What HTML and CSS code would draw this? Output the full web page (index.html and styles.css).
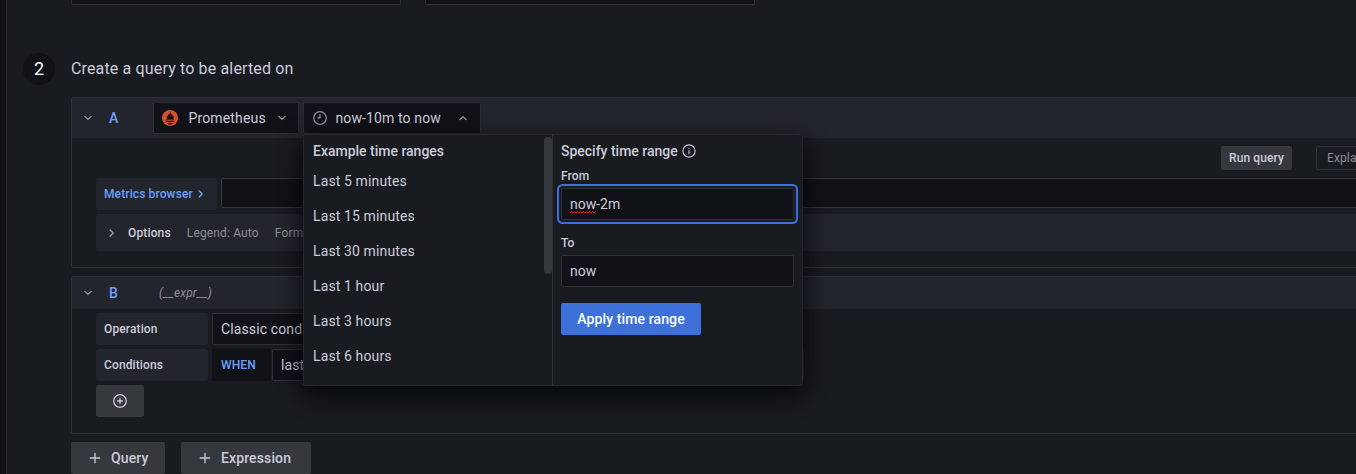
FILE: index.html
```
<!DOCTYPE html>
<html lang="en">
<head>
<meta charset="utf-8">
<title>Alert rule</title>
<link rel="stylesheet" href="styles.css">
</head>
<body>
<main class="panel">
  <div class="top-fields"><div class="top-field"></div><div class="top-field"></div></div>
  <header class="step">
    <div class="step-num">2</div>
    <h2 class="step-title">Create a query to be alerted on</h2>
  </header>

  <div class="content">
    <section class="card card-a">
      <div class="card-head head-a">
        <svg class="chev" viewBox="0 0 16 16"><path d="M4.800 6.400 8 9.400l3.200-3"/></svg>
        <span class="ref">A</span>
        <div class="picker picker-ds">
          <svg class="prom" viewBox="0 0 16 16"><circle cx="8" cy="8" r="8" fill="#da4e31"/><path fill="#17171b" d="M3.800 9.700h8.400L11.300 8.600c.5-1 .6-2 .1-3-.1.700-.3 1-.7 1.200.1-1.300-.4-2.400-.8-3.100-.1.700-.2 1-.4 1.300C9.200 3.500 8.600 2.600 8 1.400c.1 1.500-.7 2.300-1 3.600-.3-.3-.5-.7-.6-1.200-.4 1-.8 1.900-.7 2.900-.5-.3-.7-.7-.9-1.300-.3 1.100-.2 2.100.3 3.200zM3.600 10.800h8.800v1.200H3.600zM5 13h6c-.4 1-1.500 1.500-3 1.500s-2.600-.5-3-1.500z"/></svg>
          <span class="ds-name">Prometheus</span>
          <svg class="chev" viewBox="0 0 16 16"><path d="M4.800 6.400 8 9.400l3.200-3"/></svg>
        </div>
        <div class="picker picker-time">
          <svg class="clock" viewBox="0 0 16 16"><circle cx="8" cy="8" r="6.300"/><path d="M8 4.500V8H6"/></svg>
          <span class="time-value">now-10m to now</span>
          <svg class="chev" viewBox="0 0 16 16"><path d="M4.800 9.600 8 6.600l3.200 3"/></svg>
          <div class="popup">
            <div class="ranges">
              <h3 class="popup-title">Example time ranges</h3>
              <ul class="range-list">
                <li>Last 5 minutes</li><li>Last 15 minutes</li><li>Last 30 minutes</li><li>Last 1 hour</li><li>Last 3 hours</li><li>Last 6 hours</li>
              </ul>
              <div class="thumb"></div>
            </div>
            <div class="specify">
              <h3 class="popup-title">Specify time range <svg class="info" viewBox="0 0 16 16"><circle cx="8" cy="8" r="7"/><path d="M8 7.600v3.600M8 4.800v.4"/></svg></h3>
              <div class="label">From</div>
              <div class="input focused"><span class="misspelt">now<svg class="squiggle" viewBox="0 0 26 3"><path d="M0 2 1.500.7 3 2 4.500.7 6 2 7.500.7 9 2 10.500.7 12 2 13.500.7 15 2 16.500.7 18 2 19.500.7 21 2 22.500.7 24 2 25.500.7"/></svg></span>-2m</div>
              <div class="label label-to">To</div>
              <div class="input">now</div>
              <div class="apply">Apply time range</div>
            </div>
          </div>
        </div>
      </div>
      <div class="actions"><div class="run">Run query</div><div class="explain">Explain</div></div>
      <div class="metrics-row">
        <div class="metrics">Metrics browser <svg class="arrow" viewBox="0 0 8 12"><path d="m2.200 2.900 3 3.100-3 3.100"/></svg></div>
        <div class="expr"></div>
      </div>
      <div class="options">
        <svg class="arrow" viewBox="0 0 8 12"><path d="m2.200 2.900 3 3.100-3 3.100"/></svg>
        <span class="opt-title">Options</span><span class="opt">Legend: Auto</span><span class="opt">Form</span>
      </div>
    </section>

    <section class="card card-b">
      <div class="card-head head-b">
        <svg class="chev" viewBox="0 0 16 16"><path d="M4.800 6.400 8 9.400l3.200-3"/></svg>
        <span class="ref">B</span><em class="expr-name">(__expr__)</em>
      </div>
      <div class="rows">
        <div class="row"><div class="tag">Operation</div><div class="select op">Classic cond</div></div>
        <div class="row"><div class="tag">Conditions</div><div class="when">WHEN</div><div class="select last">last</div><div class="select threshold"></div></div>
        <div class="add"><svg class="plus-circle" viewBox="0 0 16 16"><circle cx="8" cy="8" r="6.300"/><path d="M8 5.500v5M5.500 8h5"/></svg></div>
      </div>
    </section>

    <div class="buttons">
      <div class="btn"><svg class="plus" viewBox="0 0 16 16"><path d="M8 3.300v9.400M3.300 8h9.400"/></svg>Query</div>
      <div class="btn btn-expression"><svg class="plus" viewBox="0 0 16 16"><path d="M8 3.300v9.400M3.300 8h9.400"/></svg>Expression</div>
    </div>
  </div>
</main>
</body>
</html>
```
FILE: styles.css
```
* { box-sizing: border-box; }
body {
  margin: 0;
  height: 474px;
  overflow: hidden;
  padding-left: 6px;
  background: #111217;
  color: #ccccdc;
  font: 14px/22px Roboto, sans-serif;
  letter-spacing: 0.12px;
}
svg { fill: none; stroke: currentColor; stroke-width: 1.3; stroke-linecap: round; stroke-linejoin: round; flex: none; display: block; }
h2, h3, ul { margin: 0; padding: 0; font-weight: 400; list-style: none; }
.panel { height: 474px; border-left: 1px solid #25282c; background: #181b1f; }
.top-fields { display: flex; gap: 24px; padding-left: 64px; height: 5px; }
.top-field { width: 330px; border: 1px solid #2e3035; border-top: 0; border-radius: 0 0 2px 2px; background: #111217; }
.step { display: flex; align-items: center; gap: 16px; margin: 48px 0 12px 16px; height: 32px; }
.step-num { width: 32px; height: 32px; border-radius: 50%; background: #111217; font-size: 18px; line-height: 32px; text-align: center; color: #fff; }
.step-title { font-size: 16px; letter-spacing: 0.15px; }
.content { width: 1320px; padding-left: 64px; }
.card { width: 1320px; border: 1px solid #2e3136; border-radius: 2px; }
.card-a { height: 171px; }
.card-b { height: 158px; margin-top: 8px; }
.card-head { display: flex; align-items: center; background: #22252b; padding-left: 8px; }
.head-a { height: 40px; }
.head-b { height: 32px; }
.chev { width: 16px; height: 16px; color: #9899a5; }
.ref { width: 45px; padding-left: 13px; color: #6e9fff; font-weight: 500; font-size: 14px; }
.picker { display: flex; align-items: center; height: 32px; background: #111217; border: 1px solid #2c2e33; border-radius: 2px; padding: 0 8px; }
.picker-ds { width: 146px; margin-left: 12px; }
.prom { width: 16px; height: 16px; stroke: none; }
.ds-name { margin-left: 10.5px; flex: 1; letter-spacing: 0.15px; }
.picker-time { position: relative; width: 178px; margin-left: 4px; }
.clock { width: 16px; height: 16px; color: #8d8e99; }
.time-value { margin-left: 7.5px; flex: 1; }
.picker-time > .chev { margin-right: 1px; }
.popup { position: absolute; z-index: 2; left: -1px; top: 31px; width: 500px; height: 252px; display: flex; background: #181b1f; border: 1px solid #25282c; border-radius: 0 0 2px 2px; box-shadow: 0 8px 24px #010409; }
.ranges { position: relative; width: 249px; border-right: 1px solid #2e3136; padding: 5px 0 0 9px; }
.popup-title { display: flex; align-items: center; height: 22px; font-size: 14px; font-weight: 500; letter-spacing: -0.01px; }
.range-list li { height: 35px; line-height: 35px; }
.range-list { margin-top: 2px; }
.thumb { position: absolute; right: 0; top: 2px; width: 8px; height: 137px; border-radius: 4px; background: #35383d; }
.specify { flex: 1; padding: 5px 8px 0; }
.info { width: 14px; height: 14px; margin-left: 4px; }
.label { height: 16px; margin: 6px 0 4px; font-size: 12px; line-height: 16px; font-weight: 500; }
.label-to { margin-top: 15px; }
.input { height: 32px; width: 233px; padding: 0 8px; line-height: 30px; border: 1px solid #2e3035; border-radius: 2px; background: #111217; letter-spacing: 0; }
.focused { box-shadow: 0 0 0 2px #181b1f, 0 0 0 4px #3d71d9; }
.misspelt { position: relative; }
.squiggle { position: absolute; left: 0; top: 15px; width: 26px; height: 3px; color: #f01c20; stroke-width: 1; }
.apply { width: 140px; height: 32px; margin-top: 16px; border-radius: 2px; background: #3d71d9; color: #fff; font-weight: 500; line-height: 32px; text-align: center; }
.actions { display: flex; gap: 24px; height: 24px; margin: 8px 0 8px 1149px; font-size: 12px; line-height: 24px; }
.run { flex: none; width: 71px; background: #35383d; border-radius: 2px; font-weight: 500; text-align: center; }
.explain { flex: none; width: 80px; border: 1px solid #2e3136; border-radius: 2px; padding-left: 10px; line-height: 22px; color: #8d8e99; }
.metrics-row { display: flex; gap: 4px; height: 32px; margin-left: 24px; }
.metrics { display: flex; align-items: center; width: 121px; padding-left: 8px; background: #22252b; border-radius: 2px; color: #6e9fff; font-size: 12px; font-weight: 500; }
.metrics .arrow { margin-left: 4px; }
.arrow { width: 8px; height: 12px; stroke-width: 1.4; }
.options > .arrow { color: #9899a5; }
.expr { flex: 1; height: 30px; background: #111217; border: 1px solid #35373c; border-radius: 2px 0 0 2px; }
.options { display: flex; align-items: center; height: 37px; margin: 4px 0 0 24px; padding-left: 12px; background: #22252b; border-radius: 2px; font-size: 12px; letter-spacing: 0.15px; }
.opt-title { margin-left: 12px; font-weight: 500; }
.opt { margin-left: 16px; color: #8d8e99; }
.expr-name { margin-left: 18px; font-size: 12px; letter-spacing: 0.15px; color: #8d8e99; }
.rows { display: flex; flex-direction: column; gap: 4px; padding: 4px 0 0 24px; }
.row { display: flex; height: 32px; }
.tag { width: 112px; margin-right: 4px; padding-left: 8px; background: #22252b; border-radius: 2px; font-size: 12px; font-weight: 500; line-height: 32px; }
.select { height: 32px; padding-left: 8px; border: 1px solid #2e3035; border-radius: 2px; background: #111217; line-height: 30px; }
.op { width: 200px; }
.when { width: 59px; margin-right: 1px; padding-left: 9px; background: #111217; border-radius: 2px; color: #6e9fff; font-size: 12px; font-weight: 500; line-height: 32px; }
.last { width: 110px; }
.threshold { width: 418px; margin-left: 4px; }
.add { display: grid; place-items: center; width: 48px; height: 32px; background: #35383d; border-radius: 2px; }
.plus-circle { width: 16px; height: 16px; }
.buttons { display: flex; gap: 16px; margin-top: 8px; }
.btn { display: flex; align-items: center; gap: 8px; width: 94px; height: 32px; padding-left: 16px; background: #35383d; border-radius: 2px; font-weight: 500; }
.btn-expression { width: 130px; }
.plus { width: 16px; height: 16px; }
```
